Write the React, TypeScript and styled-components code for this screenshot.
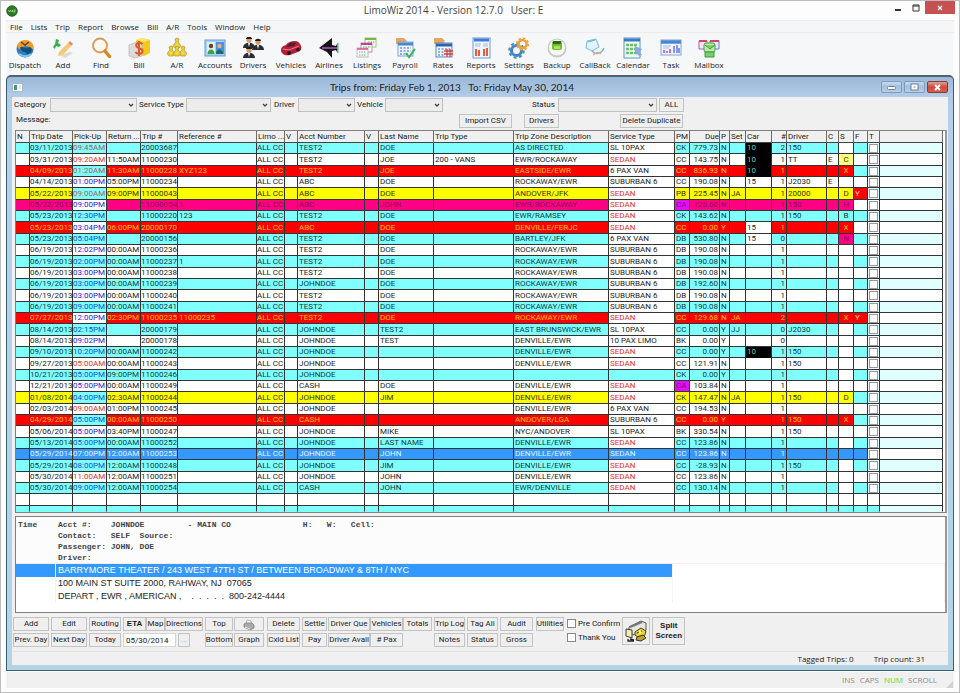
import React from "react";
import styled, { createGlobalStyle, css } from "styled-components";

const GRID_FONT = 'Roboto, "Liberation Sans", Arial, sans-serif';
const UI_FONT = '"Open Sans", "Noto Sans", "Segoe UI", sans-serif';
const MONO_FONT = '"Liberation Mono", "Courier New", monospace';

const Global = createGlobalStyle`
  *, *::before, *::after { box-sizing: border-box; }
  body { margin: 0; background: #fcfcfc; color: #222; font-family: ${UI_FONT}; }
  button, input, select { font: inherit; color: inherit; margin: 0; padding: 0; }
`;

/* ---------- application frame ---------- */

const Shell = styled.div`
  min-height: 100vh;
  display: flex;
  flex-direction: column;
  padding: 0 5px 4px 5px;
  border: 1px solid #bdbdbd;
  background: #fdfdfd;
`;

const TitleBar = styled.header`
  display: flex;
  align-items: center;
  height: 19px;
  margin-right: -1px;
`;

const TitleText = styled.h1`
  flex: 1;
  margin: 0;
  text-align: center;
  font-size: 10px;
  font-weight: 400;
  line-height: 19px;
  white-space: pre;
  color: #444;
`;

const WindowControls = styled.div`
  align-self: flex-start;
  display: flex;
`;

const FrameButton = styled.button<{ $close?: boolean }>`
  width: ${(p) => (p.$close ? "30px" : "18px")};
  height: 13px;
  border: 0;
  display: grid;
  place-items: center;
  background: ${(p) => (p.$close ? "#c75050" : "transparent")};
`;

const MenuBar = styled.nav`
  display: flex;
  gap: 8px;
  height: 13px;
  padding-left: 4px;
  align-items: center;
  background: #f5f6f7;
  border-top: 1px solid #ececec;
  border-bottom: 1px solid #ececec;
`;

const MenuButton = styled.button`
  border: 0;
  background: none;
  font-size: 8px;
  line-height: 11px;
  color: #222;
`;

const ToolBar = styled.div`
  display: flex;
  height: 42px;
  padding-top: 4px;
  background: #f6f7f9;
`;

const ToolButton = styled.button`
  width: 38px;
  display: flex;
  flex-direction: column;
  align-items: center;
  border: 0;
  background: none;
  font-size: 8px;
  line-height: 12px;
  color: #222;
  white-space: nowrap;
  svg { display: block; }
`;

/* ---------- child window ---------- */

const ChildWindow = styled.section`
  flex: 1;
  display: flex;
  flex-direction: column;
  border: 1px solid #35606f;
  border-top: 2px solid #53606f;
  border-radius: 5px 5px 0 0;
  padding: 0 5px 5px 5px;
  background: linear-gradient(#9ab8d8, #b2cce8 20px, #b5cfea 40px, #b4d4e6);
`;

const ChildTitle = styled.div`
  display: flex;
  align-items: center;
  height: 20px;
`;

const ChildHeading = styled.h2`
  flex: 1;
  margin: 0;
  text-align: center;
  font-family: Lato, ${UI_FONT};
  font-size: 10px;
  font-weight: 400;
  line-height: 20px;
  white-space: pre;
  color: #222;
`;

const ChildControls = styled.div`
  display: flex;
  gap: 2px;
`;

const GlassButton = styled.button<{ $close?: boolean }>`
  width: 21px;
  height: 12px;
  display: grid;
  place-items: center;
  border: 1px solid ${(p) => (p.$close ? "#8a3a35" : "#7f9cbd")};
  border-radius: 2px;
  background: ${(p) =>
    p.$close
      ? "linear-gradient(#e3a095, #cf4a3a 50%, #d9604c)"
      : "linear-gradient(#c8dbf0, #a3bfdf 50%, #b7d0ea)"};
`;

const Client = styled.div`
  flex: 1;
  display: flex;
  flex-direction: column;
  background: #f0f0f0;
  padding: 1px 1px 0 1px;
  font-family: ${GRID_FONT};
  font-size: 8px;
`;

const FilterRow = styled.div`
  display: flex;
  align-items: center;
  height: 14px;
  margin-left: 1px;
`;

const ActionRow = styled(FilterRow)`
  margin: 2px 0 2px 1px;
`;

const FieldLabel = styled.label<{ $w: number; $before?: number }>`
  width: ${(p) => p.$w}px;
  margin-left: ${(p) => p.$before ?? 0}px;
  line-height: 12px;
  color: #222;
  white-space: nowrap;
`;

const Message = styled.span`
  width: 443px;
  margin-left: 2px;
  align-self: flex-start;
  line-height: 11px;
`;

const ComboBox = styled.span<{ $w: number }>`
  position: relative;
  width: ${(p) => p.$w}px;
  height: 14px;
  select {
    appearance: none;
    display: block;
    width: 100%;
    height: 100%;
    border: 1px solid #c0c0c0;
    border-radius: 0;
    background: #ececec;
  }
  svg { position: absolute; right: 3px; top: 5px; pointer-events: none; }
`;

const PushButton = styled.button<{ $w?: number; $before?: number; $h?: number; $bold?: boolean; $dim?: boolean }>`
  width: ${(p) => (p.$w ? p.$w + "px" : "auto")};
  height: ${(p) => p.$h ?? 14}px;
  margin-left: ${(p) => p.$before ?? 0}px;
  border: 1px solid #c3c3c3;
  background: #efefef;
  display: grid;
  place-items: center;
  place-content: center;
  line-height: 10px;
  white-space: nowrap;
  color: ${(p) => (p.$dim ? "#999" : "#1c1c1c")};
  ${(p) => p.$bold && css`font-weight: 700; font-family: "Liberation Sans", Arial, sans-serif;`}
`;

/* ---------- trip table ---------- */

const GridFrame = styled.div`
  margin: 0 0 0 2px;
  border: 1px solid #808080;
  border-right: 2px solid #9a9a9a;
  background: #fff;
  padding-right: 2px;
`;

const TripTable = styled.table`
  width: 100%;
  table-layout: fixed;
  border-collapse: separate;
  border-spacing: 0;
  line-height: 10px;
  tbody tr { height: 11px; }
  tbody tr:nth-child(3n + 2) { height: 12px; }
  tbody tr:last-child { height: 6px; }
`;

const HeadCell = styled.th<{ $right?: boolean }>`
  height: 12px;
  padding: 0 0 0 ${(p) => (p.$right ? 0 : 1)}px;
  font-weight: 400;
  text-align: ${(p) => (p.$right ? "right" : "left")};
  color: #222;
  background: #f0f0f0;
  border-right: 1px solid #6b6b6b;
  border-bottom: 1px solid #444;
  white-space: nowrap;
`;

const Cell = styled.td<{ $bg: string; $fg: string; $align?: string; $open?: boolean; $tight?: boolean }>`
  padding: 0 ${(p) => (p.$tight ? 0 : 1)}px;
  white-space: nowrap;
  text-align: ${(p) => p.$align ?? "left"};
  background: ${(p) => p.$bg};
  color: ${(p) => p.$fg};
  border-right: 1px solid #333;
  border-bottom: 1px solid ${(p) => (p.$open ? p.$bg : "#333")};
`;

const TagBox = styled.input`
  appearance: none;
  display: block;
  width: 9px;
  height: 9px;
  margin: 0 auto;
  border: 1px solid #999;
  background: #fff;
`;

/* ---------- detail pane ---------- */

const DetailFrame = styled.section`
  margin: 3px 0 0 2px;
  min-height: 97px;
  border: 1px solid #808080;
  border-right: 2px solid #9a9a9a;
  background: #fff;
  display: grid;
  grid-template-columns: 40px minmax(0, 617px) 1fr;
  grid-auto-rows: min-content;
  font-family: "Liberation Sans", Arial, sans-serif;
  font-size: 9px;
  line-height: 13px;
`;

const MonoBlock = styled.pre`
  margin: 0;
  height: 47px;
  padding: 2px 2px 0 2px;
  background: #fcfcfc;
  border-bottom: 1px solid #f3ecec;
  font-family: ${MONO_FONT};
  font-size: 8px;
  font-weight: 700;
  line-height: 11px;
  color: #444;
`;

const StopCell = styled.div<{ $on?: boolean }>`
  height: 13px;
  padding: 0 2px;
  white-space: pre;
  color: ${(p) => (p.$on ? "#fff" : "#222")};
  background: ${(p) => (p.$on ? "#3399ff" : "#fff")};
  border-right: 1px solid #f3f3f3;
`;

/* ---------- bottom controls ---------- */

const Commands = styled.div`
  display: flex;
  gap: 2px;
  padding: 4px 0 2px 0;
  height: 37px;
`;

const Stack = styled.div<{ $after?: number }>`
  display: flex;
  flex-direction: column;
  gap: 2px;
  margin-right: ${(p) => p.$after ?? 0}px;
`;

const Line = styled.div<{ $gap?: number }>`
  display: flex;
  gap: ${(p) => p.$gap ?? 2}px;
`;

const DateInput = styled.input`
  width: 53px;
  height: 14px;
  border: 1px solid #d5d5d5;
  background: #fff;
  padding-left: 2px;
`;

const CheckLabel = styled.label`
  display: flex;
  align-items: center;
  gap: 2px;
  height: 12px;
  white-space: nowrap;
  input {
    appearance: none;
    width: 9px;
    height: 9px;
    border: 1px solid #888;
    background: #fff;
  }
`;

const ChildStatus = styled.footer`
  display: flex;
  justify-content: flex-end;
  align-items: center;
  gap: 20px;
  height: 14px;
  padding-right: 22px;
  border-top: 1px solid #e2e2e2;
  font-family: ${UI_FONT};
  font-size: 8px;
  line-height: 12px;
  margin-top: auto;
`;

const AppStatus = styled.footer`
  display: flex;
  justify-content: flex-end;
  align-items: center;
  gap: 5px;
  height: 16px;
  margin-top: 1px;
  padding-right: 17px;
  background: #f0f0f0;
  font-size: 8px;
  line-height: 12px;
  color: #8c8c8c;
`;

const LockState = styled.span<{ $on?: boolean }>`
  color: ${(p) => (p.$on ? "#4be04b" : "#8c8c8c")};
`;

/* ---------- icons ---------- */

const art: Record<string, React.ReactNode> = {
  Dispatch: (
    <>
      <circle cx="11" cy="12" r="8.5" fill="#2e7fc4" />
      <path d="M3 9c2-7 11-8 15-3 2 3 2 6 0 6-3 0-4-4-7-3-3 1-3 4-6 3z" fill="#ee9d2c" />
      <path d="M6 11c2-3 5 1 7 0s3-2 5 1c0 4-3 6-5 5-2-3-5-1-7-6z" fill="#14527e" />
      <path d="M5 17c4 3 9 3 12 0" stroke="#7cc8ee" strokeWidth="2" fill="none" />
      <path d="M7 5l4 3 4-3" stroke="#5c4320" strokeWidth="1.5" fill="none" />
    </>
  ),
  Add: (
    <>
      <path d="M7 15l9-9 3 3-8 9-5 1z" fill="#f6c878" />
      <path d="M16 6l2-2 3 3-2 2z" fill="#f08a5a" />
      <path d="M8 18l10-3 3 1-8 5z" fill="#dedad2" />
      <path d="M4 2l3 1-1 3 3 2-2 2-3-1-1 3-2-2 2-3z" fill="#3cae4a" />
    </>
  ),
  Find: (
    <>
      <circle cx="10" cy="8.5" r="7" fill="#fbf6ee" stroke="#dd9a55" strokeWidth="1.8" />
      <path d="M15 14l4.5 5.5" stroke="#d8861e" strokeWidth="3.4" strokeLinecap="round" />
      <path d="M6 7c1-2 3-3 5-3" stroke="#fff" strokeWidth="1.5" fill="none" />
    </>
  ),
  Bill: (
    <>
      <path d="M8 3l6-2 8 2v13l-6 3-8-3z" fill="#f3c91d" />
      <path d="M14 1l8 2-6 2-8-2z" fill="#ffe56e" />
      <path d="M1 8l8-3 5 2v12l-7 2-6-2z" fill="#dcdad6" stroke="#aaa" strokeWidth=".6" />
      <path d="M14.500 7c-4-3-7 0-6 2.500 1 2 6 1.500 6 4.500 0 3-5 4-7 1M11 4v15" stroke="#dc5a28" strokeWidth="2" fill="none" />
    </>
  ),
  "A/R": (
    <>
      {[[11, 6], [5, 14], [17, 14], [11, 14]].map(([x, y], i) => (
        <g key={i} fill="#e8cf3c" stroke="#b3951e" strokeWidth=".7">
          <path d={`M${x - 2} ${y - 4}l2-1 2 1-1 3c3 2 3 5 1 6h-4c-2-1-2-4 1-6z`} />
          <path d={`M${x - 1} ${y + 2}h2`} stroke="#fff6a0" />
        </g>
      ))}
    </>
  ),
  Accounts: (
    <>
      <rect x="1" y="3" width="20" height="16" fill="#a9d0f5" stroke="#6a9bd1" />
      <rect x="3" y="5" width="8" height="12" fill="#e0f2e6" />
      <rect x="12" y="5" width="8" height="12" fill="#4a8fe0" />
      <circle cx="7" cy="9" r="2.200" fill="#5c4630" />
      <path d="M3.500 17c0-6 7-6 7 0z" fill="#3aa04a" />
      <circle cx="15.500" cy="9" r="2.200" fill="#e2b08a" />
      <path d="M12 17c0-6 7-6 7 0z" fill="#1d6a6a" />
    </>
  ),
  Drivers: (
    <>
      {[[7, 1], [16, 3], [7, 11]].map(([x, y], i) => (
        <g key={i}>
          <path d={`M${x - 6} ${y + 10}c0-7 12-7 12 0z`} fill="#2a2d33" />
          <circle cx={x} cy={y + 2} r="2.600" fill="#d89a66" />
          <path d={`M${x - 3} ${y + 1}c0-3 6-3 6 0z`} fill="#1c1c1c" />
          <path d={`M${x - 1} ${y + 5}h2l-1 4z`} fill="#fff" />
        </g>
      ))}
    </>
  ),
  Vehicles: (
    <>
      <path d="M1 13c0-3 2-4 5-5 2-3 5-4 9-4 3 0 5 2 6 5 1 3 0 5-3 6l-8 3c-5 1-9-1-9-5z" fill="#b51f3a" />
      <path d="M8 8c2-3 5-3 8-2l-2 3-8 1z" fill="#4b2030" />
      <path d="M3 12l6 1 10-4" stroke="#ee7d8c" fill="none" />
      <circle cx="9" cy="16" r="2" fill="#2b1a1e" />
      <circle cx="18" cy="12.500" r="1.800" fill="#2b1a1e" />
    </>
  ),
  Airlines: (
    <>
      <path d="M1 11L14 1v7l4 1 1-2v8l-1-2-4 1v7L9 15z" fill="#151515" />
      <path d="M4 11h16" stroke="#b056c8" strokeWidth="1.500" />
      <path d="M19 6h1.500v10H19z" fill="#4cbb5c" />
    </>
  ),
  Listings: (
    <>
      <rect x="9" y="1" width="11" height="9" fill="#fff" stroke="#9c7" />
      <path d="M9 2h11" stroke="#7cb342" strokeWidth="2" />
      <rect x="5" y="6" width="11" height="9" fill="#fff" stroke="#c8a" />
      <path d="M5 7h11" stroke="#cc3aa0" strokeWidth="2" />
      <rect x="1" y="11" width="11" height="9" fill="#fff" stroke="#bbb" />
      <path d="M1 12h11" stroke="#d74a9a" strokeWidth="1.500" />
      <path d="M3 15h7M3 18h7M7 10h8M12 5h7" stroke="#58a858" strokeDasharray="1.500 1" />
    </>
  ),
  Payroll: (
    <>
      <path d="M2 1h8l3 3-3 3H2z" fill="#e9a45e" />
      <rect x="4" y="5" width="15" height="14" fill="#f2f7fd" stroke="#7aa5d8" />
      <path d="M4 7h15" stroke="#4a87cc" strokeWidth="3" />
      <path d="M6 11h11M6 14h11M6 17h8" stroke="#6d95cc" strokeDasharray="2 1.500" strokeWidth="1.300" />
      <path d="M12 16l3 4 6-8" stroke="#3fae58" strokeWidth="2" fill="none" />
    </>
  ),
  Rates: (
    <>
      <path d="M2 1h8l3 3-3 3H2z" fill="#e9a45e" />
      <rect x="4" y="6" width="16" height="14" fill="#f2f7fd" stroke="#5a87c4" />
      <path d="M4 8h16" stroke="#2b62b4" strokeWidth="3" />
      <path d="M6 12h12M6 15h6M6 18h6" stroke="#6d95cc" strokeDasharray="2 1.500" strokeWidth="1.300" />
      <path d="M12 14h9M12 17h9M15 12v8M18 12v8" stroke="#d84040" strokeWidth="1.300" />
    </>
  ),
  Reports: (
    <>
      <rect x="3" y="1" width="17" height="20" fill="#f1f6fc" stroke="#6b9cd8" />
      <path d="M4 3h15" stroke="#3c7fd0" strokeWidth="3" />
      <path d="M5 7h6M5 9h5M13 7h5M13 9h5" stroke="#9bbce4" />
      <path d="M6 19v-7M9 19v-6M14 19v-7M17 19v-8" stroke="#e65a3e" strokeWidth="2" />
    </>
  ),
  Settings: (
    <>
      <circle cx="8.500" cy="13.500" r="5" fill="none" stroke="#3f88c5" strokeWidth="3" />
      <circle cx="8.500" cy="13.500" r="7.300" fill="none" stroke="#3f88c5" strokeWidth="2" strokeDasharray="3 2.700" />
      <circle cx="14.500" cy="7" r="4" fill="none" stroke="#f0a23a" strokeWidth="2.600" />
      <circle cx="14.500" cy="7" r="5.800" fill="none" stroke="#f0a23a" strokeWidth="1.600" strokeDasharray="2.500 2" />
    </>
  ),
  Backup: (
    <>
      <circle cx="11" cy="11" r="9.500" fill="#c6c6c6" />
      <circle cx="11" cy="10.500" r="8" fill="#f8f8f8" />
      <rect x="6" y="4" width="10" height="9" rx="2" fill="#6fc02a" />
      <path d="M7 4h8v3H7z" fill="#2c6a14" />
      <path d="M8 9h6v3H8z" fill="#a7e35e" />
    </>
  ),
  CallBack: (
    <>
      <path d="M3 4l9-2 3 8-7 4-6-3z" fill="#e3f3fb" stroke="#79b9da" />
      <path d="M4 5l7-2M8 14c5 5 10 2 12-3" stroke="#6db2d6" strokeWidth="1.300" fill="none" />
      <path d="M9 18c3-3 6-3 8-1" stroke="#e2b27c" strokeWidth="1.500" fill="none" />
    </>
  ),
  Calendar: (
    <>
      <rect x="2" y="1" width="16" height="20" fill="#effaf0" stroke="#5f96c8" />
      <path d="M2 3h16" stroke="#3d7cc0" strokeWidth="3" />
      <path d="M4 8h12M4 12h12M4 16h12" stroke="#6cc070" strokeDasharray="3 1" strokeWidth="2.400" />
      <path d="M13 9l7 3-2 3 2 3-3 1-4-4z" fill="#8ca5e4" />
    </>
  ),
  Task: (
    <>
      <rect x="1" y="3" width="20" height="15" fill="#f3f7fd" stroke="#7ba6da" />
      <path d="M1 5h20" stroke="#4c86d2" strokeWidth="3.500" />
      <path d="M3 9h8M3 11h6" stroke="#9fb9e6" />
      <path d="M4 16v-3M7 16v-2M10 16v-4" stroke="#c35fc0" strokeWidth="1.800" />
      <path d="M14 16V9M17 16V8M19 16v-5" stroke="#6a7fe0" strokeWidth="1.600" />
    </>
  ),
  Mailbox: (
    <>
      <path d="M1 4h8v8H1z" fill="#f4e4f4" stroke="#b35ab3" />
      <path d="M12 4h9v8h-9z" fill="#e8ecfa" stroke="#6a7fd0" />
      <path d="M1 4h8M12 4h9" stroke="#d0456a" strokeWidth="2" />
      <rect x="6" y="6" width="11" height="9" rx="2" fill="#bfeaa8" stroke="#44a048" />
      <path d="M7 8l5 4 5-4M7 20v-5h9v5z" fill="#7ccf6a" stroke="#3b9a44" />
    </>
  ),
};

const ToolIcon = ({ name }: { name: string }) => (
  <svg width="22" height="22" viewBox="0 0 22 22" aria-hidden="true">
    {art[name]}
  </svg>
);

const Chevron = () => (
  <svg width="6" height="5" viewBox="0 0 6 5" aria-hidden="true">
    <path d="M1 1l2 2 2-2" fill="none" stroke="#444" strokeWidth="1.300" />
  </svg>
);

const AppLogo = () => (
  <svg width="12" height="12" viewBox="0 0 12 12" aria-hidden="true">
    <circle cx="6" cy="6" r="5.300" fill="#2c7a26" stroke="#194f17" strokeWidth=".8" />
    <path d="M2.500 5l1 2 1-2 1 2M6.500 5v2M7.500 5h2l-2 2h2" stroke="#a9dc8c" strokeWidth=".8" fill="none" />
  </svg>
);

const SheetIcon = () => (
  <svg width="11" height="9" viewBox="0 0 11 9" aria-hidden="true">
    <rect x=".5" y=".5" width="10" height="8" fill="#fff" stroke="#a9b8c4" />
    <path d="M2 2h3v5H2z" fill="#3c9a80" />
    <path d="M7 3h2M7 5h2" stroke="#bcd" />
  </svg>
);

const SizeGrip = () => (
  <svg width="7" height="7" viewBox="0 0 7 7" aria-hidden="true">
    <path d="M7 0v7H0z" fill="#d2d2d2" />
  </svg>
);

const GripSlot = styled.span`
  align-self: flex-end;
  height: 7px;
  margin: 0 -16px 0 4px;
  line-height: 0;
`;

const PrinterIcon = () => (
  <svg width="12" height="11" viewBox="0 0 12 11" aria-hidden="true">
    <path d="M4 1l4 1v3H3z" fill="#fff" stroke="#999" strokeWidth=".7" />
    <path d="M1 5l2-1h6l2 2v3l-4 2-6-3z" fill="#a9a9a9" stroke="#777" strokeWidth=".7" />
    <path d="M2 8l5 2" stroke="#eee" />
  </svg>
);

const ScannerIcon = () => (
  <svg width="24" height="24" viewBox="0 0 24 24" aria-hidden="true">
    <path d="M5 8l12-6 5 2v7l-12 5-5-3z" fill="#e5e5e5" stroke="#555" />
    <path d="M6 8l12-5" stroke="#777" strokeWidth="2" />
    <path d="M2 10l6 1v8l-6-2z" fill="#f4f1b0" stroke="#3a3a3a" />
    <path d="M11 13l6-4 5 3-1 4-6 3-4-3z" fill="#efd335" stroke="#4a4210" />
    <path d="M13 18l6-2 3 3-5 3-5-1z" fill="#b5a428" stroke="#333" />
    <path d="M13 14l5-2M6 20l4 1M4 20v2h6" stroke="#222" strokeWidth="1.300" fill="none" />
    <circle cx="16" cy="13" r="1.500" fill="#fff8a8" />
  </svg>
);

/* ---------- data ---------- */

type Tone = "base" | "red" | "yellow" | "pink" | "selected";

type Trip = {
  date: string; pick: string; ret: string; trip: string; ref?: string; acct: string;
  last: string; type?: string; zone: string; service: string; pm: string; due: string;
  paid: string; set?: string; car?: string; n: string; driver?: string;
  c?: string; s?: string; f?: string; tone: Tone;
};

const t = (
  date: string, pick: string, ret: string, trip: string, acct: string, last: string,
  zone: string, service: string, pm: string, due: string, paid: string, n: string,
  extra: Partial<Trip> = {},
): Trip => ({ date, pick, ret, trip, acct, last, zone, service, pm, due, paid, n, tone: "base", ...extra });

const trips: Trip[] = [
  t("03/11/2013", "09:45AM", "", "20003687", "TEST2", "DOE", "AS DIRECTED", "SL 10PAX", "CK", "779.73", "N", "2", { car: "10", driver: "150" }),
  t("03/31/2013", "09:20AM", "11:50AM", "11000230", "TEST2", "JOE", "EWR/ROCKAWAY", "SEDAN", "CC", "143.75", "N", "1", { type: "200 - VANS", car: "10", driver: "TT", c: "E", s: "C" }),
  t("04/09/2013", "01:20AM", "11:30AM", "11000228", "TEST2", "JOE", "EASTSIDE/EWR", "6 PAX VAN", "CC", "836.93", "N", "1", { ref: "XYZ123", car: "10", s: "X", tone: "red" }),
  t("04/14/2013", "01:00PM", "05:00PM", "11000234", "ABC", "DOE", "ROCKAWAY/EWR", "SUBURBAN 6", "CC", "190.08", "N", "1", { car: "15", driver: "J2030", c: "E" }),
  t("05/22/2013", "09:00AM", "09:00PM", "11000043", "ABC", "DOE", "ANDOVER/JFK", "SEDAN", "PB", "225.45", "N", "1", { set: "JA", driver: "20000", s: "D", f: "Y", tone: "yellow" }),
  t("05/22/2013", "09:00PM", "", "11000054", "ABC", "JOHN", "EWR/ROCKAWAY", "SEDAN", "CA", "126.60", "N", "1", { ref: "1", driver: "150", s: "H", tone: "pink" }),
  t("05/23/2013", "12:30PM", "", "11000220", "TEST2", "DOE", "EWR/RAMSEY", "SEDAN", "CK", "143.62", "N", "1", { ref: "123", driver: "150", s: "B" }),
  t("05/23/2013", "03:04PM", "06:00PM", "20000170", "ABC", "DOE", "DENVILLE/FERJC", "SEDAN", "CC", "0.00", "Y", "1", { car: "15", s: "X", tone: "red" }),
  t("05/23/2013", "05:04PM", "", "20000156", "TEST2", "DOE", "BARTLEY/JFK", "6 PAX VAN", "DB", "530.80", "N", "0", { car: "15", s: "N" }),
  t("06/19/2013", "12:02PM", "00:00AM", "11000236", "TEST2", "DOE", "ROCKAWAY/EWR", "SUBURBAN 6", "DB", "190.08", "N", "1"),
  t("06/19/2013", "02:00PM", "00:00AM", "11000237", "TEST2", "DOE", "ROCKAWAY/EWR", "SUBURBAN 6", "DB", "190.08", "N", "1", { ref: "1" }),
  t("06/19/2013", "03:00PM", "00:00AM", "11000238", "TEST2", "DOE", "ROCKAWAY/EWR", "SUBURBAN 6", "DB", "190.08", "N", "1"),
  t("06/19/2013", "03:00PM", "00:00AM", "11000239", "JOHNDOE", "DOE", "ROCKAWAY/EWR", "SUBURBAN 6", "DB", "192.60", "N", "1"),
  t("06/19/2013", "03:00PM", "00:00AM", "11000240", "TEST2", "DOE", "ROCKAWAY/EWR", "SUBURBAN 6", "DB", "190.08", "N", "1"),
  t("06/19/2013", "09:00PM", "00:00AM", "11000241", "TEST2", "DOE", "ROCKAWAY/EWR", "SUBURBAN 6", "DB", "190.08", "N", "1"),
  t("07/27/2013", "12:00PM", "02:30PM", "11000235", "TEST2", "DOE", "ROCKAWAY/EWR", "SEDAN", "CC", "129.68", "N", "2", { ref: "11000235", set: "JA", s: "X", f: "Y", tone: "red" }),
  t("08/14/2013", "02:15PM", "", "20000179", "JOHNDOE", "TEST2", "EAST BRUNSWICK/EWR", "SL 10PAX", "CC", "0.00", "Y", "0", { set: "JJ", driver: "J2030" }),
  t("08/14/2013", "09:02PM", "", "20000178", "JOHNDOE", "TEST", "DENVILLE/EWR", "10 PAX LIMO", "BK", "0.00", "Y", "0"),
  t("09/10/2013", "10:20PM", "00:00AM", "11000242", "JOHNDOE", "", "DENVILLE/EWR", "SEDAN", "CC", "0.00", "Y", "1", { car: "10", driver: "150" }),
  t("09/27/2013", "05:00AM", "00:00AM", "11000243", "JOHNDOE", "", "DENVILLE/EWR", "SEDAN", "CC", "121.91", "N", "1", { driver: "150" }),
  t("10/21/2013", "05:00PM", "09:00PM", "11000246", "JOHNDOE", "", "", "", "CK", "0.00", "Y", "1"),
  t("12/21/2013", "05:00PM", "00:00AM", "11000249", "CASH", "DOE", "DENVILLE/EWR", "SEDAN", "CA", "103.84", "N", "1"),
  t("01/08/2014", "04:00PM", "02:30AM", "11000244", "JOHNDOE", "JIM", "DENVILLE/EWR", "SEDAN", "CK", "147.47", "N", "1", { set: "JA", driver: "150", s: "D", tone: "yellow" }),
  t("02/03/2014", "09:00AM", "01:00PM", "11000245", "JOHNDOE", "", "DENVILLE/EWR", "6 PAX VAN", "CC", "194.53", "N", "1"),
  t("04/29/2014", "05:00PM", "00:00AM", "11000250", "CASH", "", "ANDOVER/LGA", "SUBURBAN 6", "CC", "0.00", "Y", "1", { driver: "150", s: "X", tone: "red" }),
  t("05/06/2014", "05:00PM", "03:40PM", "11000247", "JOHNDOE", "MIKE", "NYC/ANDOVER", "SL 10PAX", "BK", "330.54", "N", "1", { driver: "150" }),
  t("05/13/2014", "05:00PM", "00:00AM", "11000252", "JOHNDOE", "LAST NAME", "DENVILLE/EWR", "SEDAN", "CC", "123.86", "N", "1"),
  t("05/29/2014", "07:00PM", "12:00AM", "11000253", "JOHNDOE", "JOHN", "DENVILLE/EWR", "SEDAN", "CC", "123.86", "N", "1", { tone: "selected" }),
  t("05/29/2014", "08:00PM", "12:00AM", "11000248", "JOHNDOE", "JIM", "DENVILLE/EWR", "SEDAN", "CC", "-28.93", "N", "1", { driver: "150" }),
  t("05/30/2014", "11:00AM", "12:00AM", "11000251", "JOHNDOE", "JOHN", "DENVILLE/EWR", "SEDAN", "CC", "123.86", "N", "1"),
  t("05/30/2014", "09:00PM", "12:00AM", "11000254", "CASH", "JOHN", "EWR/DENVILLE", "SEDAN", "CC", "130.14", "N", "1"),
];

type Column = { key: string; title: string; width?: number; align?: "right" | "center"; tight?: boolean };

const columns: Column[] = [
  { key: "new", title: "N", width: 14 },
  { key: "date", title: "Trip Date", width: 43, align: "right", tight: true },
  { key: "pick", title: "Pick-Up", width: 34, tight: true },
  { key: "ret", title: "Return ...", width: 34, tight: true },
  { key: "trip", title: "Trip #", width: 37, tight: true },
  { key: "ref", title: "Reference #", width: 79 },
  { key: "limo", title: "Limo ...", width: 28, tight: true },
  { key: "v1", title: "V", width: 13 },
  { key: "acct", title: "Acct Number", width: 67 },
  { key: "v2", title: "V", width: 14 },
  { key: "last", title: "Last Name", width: 55 },
  { key: "type", title: "Trip Type", width: 80 },
  { key: "zone", title: "Trip Zone Description", width: 95 },
  { key: "service", title: "Service Type", width: 66 },
  { key: "pm", title: "PM", width: 15 },
  { key: "due", title: "Due", width: 30, align: "right" },
  { key: "paid", title: "P", width: 10 },
  { key: "set", title: "Set", width: 16 },
  { key: "car", title: "Car", width: 26 },
  { key: "n", title: "#", width: 15, align: "right" },
  { key: "driver", title: "Driver", width: 40 },
  { key: "c", title: "C", width: 12 },
  { key: "s", title: "S", width: 15, align: "center" },
  { key: "f", title: "F", width: 14 },
  { key: "t", title: "T", width: 12 },
  { key: "rest", title: "" },
];

const AQUA = "#80ffff";
const tones: Record<Tone, { bg: string; fg: string }> = {
  base: { bg: "#ffffff", fg: "#222222" },
  red: { bg: "#ff0000", fg: "#ffc814" },
  yellow: { bg: "#ffff00", fg: "#333300" },
  pink: { bg: "#ff0084", fg: "#8a0055" },
  selected: { bg: "#3399ff", fg: "#e4f2ff" },
};

function paint(key: string, trip: Trip, odd: boolean): { bg: string; fg: string } {
  const stripe = odd ? AQUA : "#ffffff";
  const row = trip.tone === "base" ? { bg: stripe, fg: odd ? "#0c3a3a" : "#222222" } : tones[trip.tone];
  if (key === "rest" || key === "t") return { bg: odd ? "#e2ffff" : "#ffffff", fg: "#222" };
  if (trip.tone === "selected") return row;
  switch (key) {
    case "pick":
      return { bg: stripe, fg: trip.pick.endsWith("AM") ? (odd ? "#a0605c" : "#e03030") : odd ? "#0a50d8" : "#2a20d8" };
    case "service":
      if (!trip.service) return row;
      return { bg: "#ffffff", fg: trip.service === "SEDAN" ? "#e03030" : "#222222" };
    case "pm":
      return trip.pm === "CA" ? { bg: "#e010f0", fg: "#8a00a0" } : row;
    case "car":
      if (trip.car === "10") return { bg: "#000000", fg: "#5ccaca" };
      return trip.car ? { bg: "#ffffff", fg: "#222222" } : row;
    case "s":
      if (trip.s === "C") return { bg: "#ffff80", fg: "#444400" };
      if (trip.s === "N") return { bg: "#ff0084", fg: "#8a0055" };
      return trip.s ? row : { bg: "#ffffff", fg: "#222222" };
    case "f":
      return trip.f ? { bg: "#ff0000", fg: "#ffe08a" } : { bg: stripe, fg: "#222222" };
    default:
      return row;
  }
}

const menus = ["File", "Lists", "Trip", "Report", "Browse", "Bill", "A/R", "Tools", "Window", "Help"];
const tools = [
  "Dispatch", "Add", "Find", "Bill", "A/R", "Accounts", "Drivers", "Vehicles", "Airlines", "Listings",
  "Payroll", "Rates", "Reports", "Settings", "Backup", "CallBack", "Calendar", "Task", "Mailbox",
];
const filters = [
  { label: "Category", labelWidth: 36, before: 0, width: 87 },
  { label: "Service Type", labelWidth: 47, before: 2, width: 85 },
  { label: "Driver", labelWidth: 24, before: 3, width: 57 },
  { label: "Vehicle", labelWidth: 28, before: 2, width: 58 },
  { label: "Status", labelWidth: 26, before: 89, width: 99 },
];

function Trips() {
  return (
    <TripTable>
      <colgroup>
        {columns.map((c) => (
          <col key={c.key} width={c.width} />
        ))}
      </colgroup>
      <thead>
        <tr>
          {columns.map((c) => (
            <HeadCell key={c.key} $right={c.key === "due" || c.key === "n"}>{c.title}</HeadCell>
          ))}
        </tr>
      </thead>
      <tbody>
        {trips.map((trip, i) => (
          <tr key={trip.trip}>
            {columns.map((c) => {
              const { bg, fg } = paint(c.key, trip, i % 2 === 0);
              const values = { ...trip, limo: "ALL CC" } as unknown as Record<string, string>;
              return (
                <Cell
                  key={c.key}
                  $bg={bg}
                  $fg={fg}
                  $align={c.align}
                  $tight={c.tight}
                  $open={c.key === "car" && trip.car === "10"}
                >
                  {c.key === "t" ? <TagBox type="checkbox" aria-label={`Tag trip ${trip.trip}`} /> : values[c.key]}
                </Cell>
              );
            })}
          </tr>
        ))}
        {["#ffffff", AQUA].map((bg, i) => (
          <tr key={bg}>
            {columns.map((c) => (
              <Cell key={c.key} $bg={c.key === "rest" && i ? "#e2ffff" : bg} $fg="#222" $open={i === 1} />
            ))}
          </tr>
        ))}
      </tbody>
    </TripTable>
  );
}

const stops = [
  "BARRYMORE THEATER / 243 WEST 47TH ST / BETWEEN BROADWAY & 8TH / NYC",
  "100 MAIN ST SUITE 2000, RAHWAY, NJ  07065",
  "DEPART , EWR , AMERICAN ,    .  .  .  .  .  800-242-4444",
];

const accountText = [
  "Acct #:    JOHNDOE         - MAIN CO               H:   W:   Cell:",
  "Contact:   SELF  Source:",
  "Passenger: JOHN, DOE",
  "Driver:",
].join("\n");

export default function App() {
  return (
    <>
      <Global />
      <Shell>
        <TitleBar>
          <AppLogo />
          <TitleText>LimoWiz 2014 - Version 12.7.0   User: E</TitleText>
          <WindowControls>
            <FrameButton aria-label="Minimize">
              <svg width="8" height="8" viewBox="0 0 8 8"><path d="M1 6h6" stroke="#333" strokeWidth="2" /></svg>
            </FrameButton>
            <FrameButton aria-label="Maximize">
              <svg width="8" height="8" viewBox="0 0 8 8"><path d="M1 1h6v6H1zM1 2h6" stroke="#333" fill="none" /></svg>
            </FrameButton>
            <FrameButton $close aria-label="Close">
              <svg width="6" height="6" viewBox="0 0 6 6"><path d="M1 1l4 4M5 1L1 5" stroke="#fff" strokeWidth="1.200" /></svg>
            </FrameButton>
          </WindowControls>
        </TitleBar>
        <MenuBar>
          {menus.map((m) => (
            <MenuButton key={m}>{m}</MenuButton>
          ))}
        </MenuBar>
        <ToolBar>
          {tools.map((name) => (
            <ToolButton key={name}>
              <ToolIcon name={name} />
              {name}
            </ToolButton>
          ))}
        </ToolBar>

        <ChildWindow>
          <ChildTitle>
            <SheetIcon />
            <ChildHeading>Trips from: Friday Feb 1, 2013   To: Friday May 30, 2014</ChildHeading>
            <ChildControls>
              <GlassButton aria-label="Minimize trips">
                <svg width="9" height="5" viewBox="0 0 9 5"><rect x=".5" y="1.500" width="8" height="3" rx="1" fill="#fff" stroke="#6d7f95" /></svg>
              </GlassButton>
              <GlassButton aria-label="Maximize trips">
                <svg width="9" height="8" viewBox="0 0 9 8"><rect x="1" y="1" width="7" height="6" fill="#fff" stroke="#6d7f95" /><path d="M3.500 4h2" stroke="#6d7f95" /></svg>
              </GlassButton>
              <GlassButton $close aria-label="Close trips">
                <svg width="9" height="7" viewBox="0 0 9 7"><path d="M2 1l5 5M7 1L2 6" stroke="#fff" strokeWidth="2" /></svg>
              </GlassButton>
            </ChildControls>
          </ChildTitle>

          <Client>
            <FilterRow>
              {filters.map((f) => (
                <React.Fragment key={f.label}>
                  <FieldLabel htmlFor={"filter-" + f.label} $w={f.labelWidth} $before={f.before}>{f.label}</FieldLabel>
                  <ComboBox $w={f.width}>
                    <select id={"filter-" + f.label}><option value="" /></select>
                    <Chevron />
                  </ComboBox>
                </React.Fragment>
              ))}
              <PushButton $w={25} $before={2}>ALL</PushButton>
            </FilterRow>
            <ActionRow>
              <Message>Message:</Message>
              <PushButton $w={53}>Import CSV</PushButton>
              <PushButton $w={35} $before={12}>Drivers</PushButton>
              <PushButton $w={63} $before={61}>Delete Duplicate</PushButton>
            </ActionRow>

            <GridFrame>
              <Trips />
            </GridFrame>

            <DetailFrame>
              <MonoBlock>Time</MonoBlock>
              <MonoBlock>{accountText}</MonoBlock>
              <MonoBlock />
              {stops.map((text, i) => (
                <React.Fragment key={text}>
                  <StopCell $on={i === 0} />
                  <StopCell $on={i === 0}>{text}</StopCell>
                  <StopCell />
                </React.Fragment>
              ))}
            </DetailFrame>

            <Commands>
              <Stack>
                <Line><PushButton $w={36}>Add</PushButton><PushButton $w={36}>Edit</PushButton><PushButton $w={32}>Routing</PushButton></Line>
                <Line><PushButton $w={36}>Prev. Day</PushButton><PushButton $w={36}>Next Day</PushButton><PushButton $w={32}>Today</PushButton></Line>
              </Stack>
              <Stack>
                <Line $gap={0}><PushButton $w={23} $bold>ETA</PushButton><PushButton $w={19}>Map</PushButton><PushButton $w={38}>Directions</PushButton></Line>
                <Line><DateInput aria-label="Trip date" defaultValue="05/30/2014" /><PushButton $w={12} $dim>...</PushButton></Line>
              </Stack>
              <Stack $after={1}>
                <Line $gap={1}><PushButton $w={28}>Top</PushButton><PushButton $w={30} aria-label="Print"><PrinterIcon /></PushButton></Line>
                <Line $gap={1}><PushButton $w={28}>Bottom</PushButton><PushButton $w={30}>Graph</PushButton></Line>
              </Stack>
              <Stack>
                <PushButton $w={33}>Delete</PushButton>
                <PushButton $w={33}>Cxld List</PushButton>
              </Stack>
              <Stack>
                <Line $gap={0}><PushButton $w={25}>Settle</PushButton><PushButton $w={42} $before={1}>Driver Que</PushButton><PushButton $w={33}>Vehicles</PushButton><PushButton $w={29}>Totals</PushButton></Line>
                <Line $gap={0}><PushButton $w={25}>Pay</PushButton><PushButton $w={42} $before={1}>Driver Avail</PushButton><PushButton $w={33}># Pax</PushButton></Line>
              </Stack>
              <Stack $after={1}>
                <Line><PushButton $w={31}>Trip Log</PushButton><PushButton $w={31}>Tag All</PushButton><PushButton $w={33}>Audit</PushButton></Line>
                <Line><PushButton $w={31}>Notes</PushButton><PushButton $w={31}>Status</PushButton><PushButton $w={33}>Gross</PushButton></Line>
              </Stack>
              <Stack $after={1}>
                <PushButton $w={28}>Utilities</PushButton>
              </Stack>
              <Stack>
                <CheckLabel><input type="checkbox" />Pre Confirm</CheckLabel>
                <CheckLabel><input type="checkbox" />Thank You</CheckLabel>
              </Stack>
              <PushButton $w={28} $h={28} aria-label="Scan"><ScannerIcon /></PushButton>
              <PushButton $w={33} $h={28} $bold>Split<br />Screen</PushButton>
            </Commands>

            <ChildStatus>
              <span>Tagged Trips: 0</span>
              <span>Trip count: 31</span>
            </ChildStatus>
          </Client>
        </ChildWindow>

        <AppStatus>
          <LockState>INS</LockState>
          <LockState>CAPS</LockState>
          <LockState $on>NUM</LockState>
          <LockState>SCROLL</LockState>
          <GripSlot><SizeGrip /></GripSlot>
        </AppStatus>
      </Shell>
    </>
  );
}
